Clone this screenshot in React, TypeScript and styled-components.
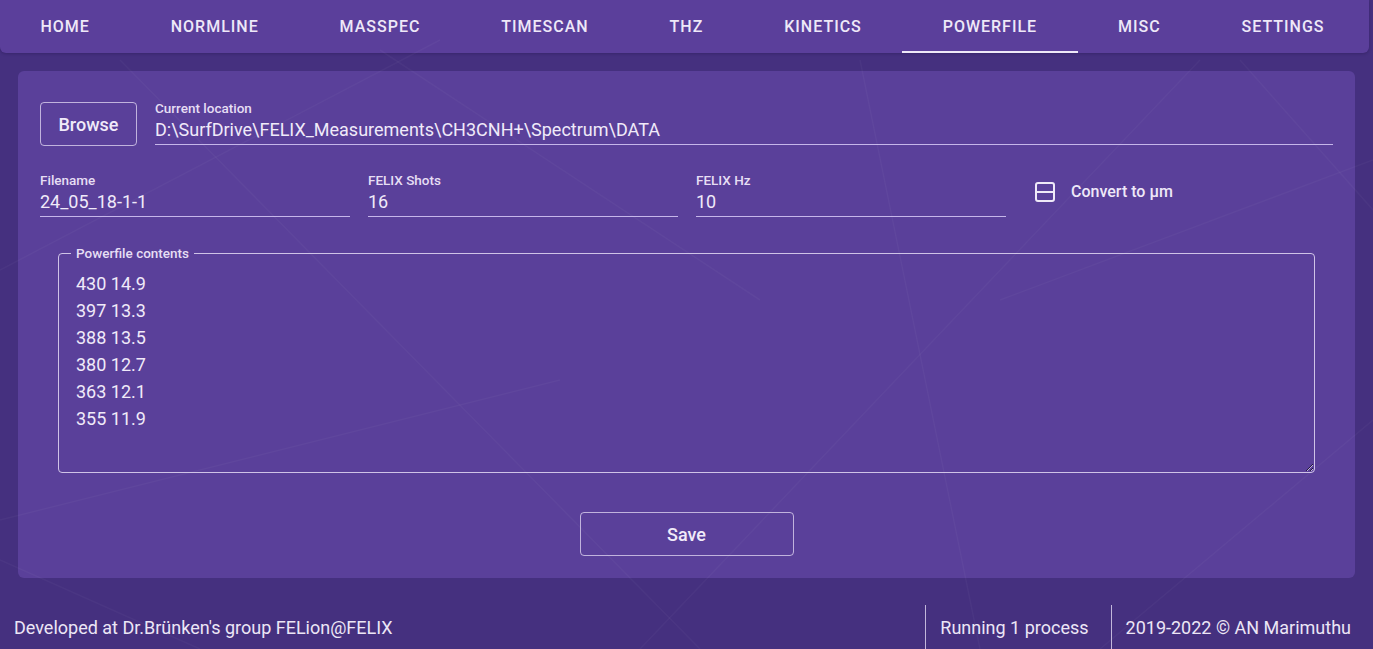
import React from 'react';
import styled, { createGlobalStyle } from 'styled-components';

const GlobalStyle = createGlobalStyle`
    html, body {
        margin: 0;
        padding: 0;
        height: 100%;
        overflow: hidden;
    }
    body {
        font-family: Roboto, 'Noto Sans', Arial, sans-serif;
        background: #45307f;
        color: #ece6f6;
    }
    * {
        box-sizing: border-box;
    }
`;

const tabs = [
    'Home',
    'Normline',
    'Masspec',
    'Timescan',
    'THz',
    'Kinetics',
    'Powerfile',
    'Misc',
    'Settings',
];

const powerfile = `430 14.9
397 13.3
388 13.5
380 12.7
363 12.1
355 11.9`;

const BackgroundLines = () => (
    <Lines viewBox="0 0 1373 649" preserveAspectRatio="none">
        <line x1="0" y1="270" x2="440" y2="40" />
        <line x1="120" y1="60" x2="700" y2="649" />
        <line x1="380" y1="50" x2="760" y2="300" />
        <line x1="640" y1="649" x2="1200" y2="60" />
        <line x1="860" y1="60" x2="980" y2="649" />
        <line x1="1000" y1="300" x2="1373" y2="160" />
        <line x1="1100" y1="649" x2="1373" y2="420" />
        <line x1="0" y1="520" x2="560" y2="380" />
        <line x1="1240" y1="60" x2="1373" y2="210" />
        <line x1="200" y1="649" x2="0" y2="560" />
    </Lines>
);

const CheckIcon = () => (
    <svg width="22" height="22" viewBox="0 0 22 22" fill="none">
        <rect x="2" y="2" width="18" height="18" rx="2" stroke="#efe9f8" strokeWidth="2" />
        <line x1="2" y1="11" x2="20" y2="11" stroke="#efe9f8" strokeWidth="2" />
    </svg>
);

export default function App() {
    return (
        <>
            <GlobalStyle />
            <Page>
                <BackgroundLines />
                <Nav>
                    {tabs.map((tab) => (
                        <Tab key={tab} $active={tab === 'Powerfile'}>
                            {tab}
                        </Tab>
                    ))}
                </Nav>
                <Main>
                    <Card>
                        <LocationRow>
                            <OutlineButton $width="97px">Browse</OutlineButton>
                            <Field $grow>
                                <FieldLabel>Current location</FieldLabel>
                                <FieldValue>
                                    D:\SurfDrive\FELIX_Measurements\CH3CNH+\Spectrum\DATA
                                </FieldValue>
                            </Field>
                        </LocationRow>
                        <InputsRow>
                            <Field>
                                <FieldLabel>Filename</FieldLabel>
                                <FieldValue>24_05_18-1-1</FieldValue>
                            </Field>
                            <Field>
                                <FieldLabel>FELIX Shots</FieldLabel>
                                <FieldValue>16</FieldValue>
                            </Field>
                            <Field>
                                <FieldLabel>FELIX Hz</FieldLabel>
                                <FieldValue>10</FieldValue>
                            </Field>
                            <CheckLabel>
                                <CheckIcon />
                                Convert to µm
                            </CheckLabel>
                        </InputsRow>
                        <ContentsBox>
                            <Legend>Powerfile contents</Legend>
                            <Contents readOnly defaultValue={powerfile} />
                        </ContentsBox>
                        <SaveRow>
                            <OutlineButton $width="214px">Save</OutlineButton>
                        </SaveRow>
                    </Card>
                </Main>
                <Footer>
                    <FooterText>Developed at Dr.Brünken's group FELion@FELIX</FooterText>
                    <FooterRight>
                        <FooterItem>Running 1 process</FooterItem>
                        <FooterItem>2019-2022 © AN Marimuthu</FooterItem>
                    </FooterRight>
                </Footer>
            </Page>
        </>
    );
}

const Page = styled.div`
    position: relative;
    height: 100vh;
    display: flex;
    flex-direction: column;
    overflow: hidden;
`;
Page.displayName = 'Page';

const Lines = styled.svg`
    position: absolute;
    inset: 0;
    width: 100%;
    height: 100%;
    pointer-events: none;
    z-index: 2;
    line {
        stroke: #ffffff;
        stroke-opacity: 0.03;
        stroke-width: 1.5;
    }
`;

const Nav = styled.nav`
    display: flex;
    height: 53px;
    margin-right: 4px;
    padding-right: 4px;
    background: #5b3f9b;
    border-radius: 0 0 6px 6px;
    box-shadow: 0 1px 3px rgba(20, 8, 50, 0.25);
    flex-shrink: 0;
`;
Nav.displayName = 'Nav';

const Tab = styled.div<{ $active?: boolean }>`
    flex: 1 1 auto;
    display: flex;
    align-items: center;
    justify-content: center;
    padding: 2px 18px 0;
    font-size: 16px;
    font-weight: 500;
    letter-spacing: 1px;
    text-transform: uppercase;
    color: #eee8f8;
    border-bottom: 2px solid ${({ $active }) => ($active ? '#eee8f8' : 'transparent')};
`;
Tab.displayName = 'Tab';

const Main = styled.main`
    padding: 18px 18px 27px;
    flex-shrink: 0;
`;

const Card = styled.section`
    height: 507px;
    background: #5a409a;
    border-radius: 6px;
    padding: 29px 22px 22px;
    display: flex;
    flex-direction: column;
`;
Card.displayName = 'Card';

const LocationRow = styled.div`
    display: flex;
    align-items: flex-start;
    gap: 18px;
`;

const InputsRow = styled.div`
    display: flex;
    align-items: center;
    gap: 18px;
    margin-top: 26px;
`;

const OutlineButton = styled.button<{ $width: string }>`
    width: ${({ $width }) => $width};
    height: 44px;
    margin-top: 2px;
    background: transparent;
    border: 1px solid rgba(236, 228, 250, 0.7);
    border-radius: 4px;
    color: #f0eaf9;
    font-family: Roboto, sans-serif;
    font-size: 18px;
    font-weight: 500;
`;

const Field = styled.div<{ $grow?: boolean }>`
    display: flex;
    flex-direction: column;
    width: ${({ $grow }) => ($grow ? 'auto' : '310px')};
    flex: ${({ $grow }) => ($grow ? '1' : 'none')};
`;

const FieldLabel = styled.label`
    font-size: 13.5px;
    line-height: 16px;
    font-weight: 500;
    color: #e6def4;
`;

const FieldValue = styled.div`
    font-size: 18px;
    line-height: 24px;
    padding: 2px 0 2px;
    border-bottom: 1px solid #c6b6ea;
    color: #f0eaf9;
    white-space: nowrap;
`;

const CheckLabel = styled.div`
    display: flex;
    align-items: center;
    gap: 15px;
    margin-left: 10px;
    margin-top: -6px;
    font-size: 16px;
    font-weight: 500;
    color: #eee8f8;
`;

const ContentsBox = styled.fieldset`
    margin: 29px 18px 0;
    padding: 0;
    border: 1px solid rgba(236, 228, 250, 0.8);
    border-radius: 4px;
    min-width: 0;
`;

const Legend = styled.legend`
    margin-left: 12px;
    padding: 0 5px;
    font-size: 13.5px;
    line-height: 14px;
    font-weight: 500;
    color: #e6def4;
`;

const Contents = styled.textarea`
    display: block;
    width: 100%;
    height: 212px;
    padding: 10px 17px;
    background: transparent;
    border: none;
    outline: none;
    resize: vertical;
    color: #f0eaf9;
    font-family: Roboto, sans-serif;
    font-size: 18px;
    line-height: 27px;
`;

const SaveRow = styled.div`
    display: flex;
    justify-content: center;
    margin-top: 37px;
`;

const Footer = styled.footer`
    height: 44px;
    display: flex;
    align-items: stretch;
    justify-content: space-between;
    padding-left: 14px;
    flex-shrink: 0;
`;
Footer.displayName = 'Footer';

const FooterText = styled.div`
    display: flex;
    align-items: center;
    font-size: 18px;
    color: #ece6f6;
`;

const FooterRight = styled.div`
    display: flex;
    align-items: stretch;
`;

const FooterItem = styled.div`
    display: flex;
    align-items: center;
    padding: 0 22px 0 14px;
    border-left: 1px solid rgba(236, 228, 250, 0.75);
    font-size: 18px;
    color: #ece6f6;
`;
